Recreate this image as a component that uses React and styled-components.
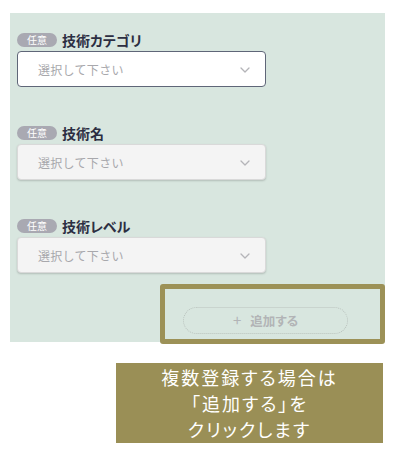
import React from "react";
import styled, { createGlobalStyle } from "styled-components";

const GlobalStyle = createGlobalStyle`
	* {
		box-sizing: border-box;
	}

	body {
		margin: 0;
		background: #ffffff;
		font-family: "Noto Sans CJK JP", "Noto Sans", sans-serif;
	}
`

function Chevron() {
	return (
		<svg width="10" height="6" viewBox="0 0 10 6" fill="none">
			<polyline points="1,1 5,5 9,1" stroke="#b4b4b8" strokeWidth="1.3" strokeLinecap="round" strokeLinejoin="round" />
		</svg>
	)
}

function App() {
	const fields = [
		{label: '技術カテゴリ', focused: true},
		{label: '技術名', focused: false},
		{label: '技術レベル', focused: false},
	]

	return (
		<>
		<GlobalStyle />
		<Panel>
			{fields.map((field, index) => {
				return (
					<Field key={index}>
						<LabelRow>
							<Badge>任意</Badge>
							<Label>{field.label}</Label>
						</LabelRow>
						<Select focused={field.focused}>
							<span>選択して下さい</span>
							<Chevron />
						</Select>
					</Field>
				)
			})}
			<Footer>
				<AddButton>
					<Plus>+</Plus>
					<span>追加する</span>
				</AddButton>
			</Footer>
			<Highlight />
		</Panel>
		<Callout>
			<span>複数登録する場合は</span>
			<span>「追加する」を</span>
			<span>クリックします</span>
		</Callout>
		</>
	)
}

const Panel = styled.section`
	position: relative;
	width: 375px;
	margin: 13px 0 0 10px;
	padding: 20px 0 8px 7px;
	background-color: #d8e6df;
	display: flex;
	flex-direction: column;
	gap: 39px;
`

const Field = styled.div`
	display: flex;
	flex-direction: column;
	gap: 4px;
	width: 249px;
`

const LabelRow = styled.div`
	display: flex;
	align-items: center;
	height: 14px;
	gap: 5px;
`

const Badge = styled.span`
	width: 40px;
	height: 14px;
	border-radius: 7px;
	background-color: #a9a9b2;
	color: #ffffff;
	font-size: 10px;
	line-height: 14px;
	text-align: center;
`

const Label = styled.span`
	font-size: 14px;
	font-weight: bold;
	color: #2c2e42;
	line-height: 14px;
	font-feature-settings: "palt";
`

const Select = styled.div`
	height: 36px;
	display: flex;
	align-items: center;
	justify-content: space-between;
	padding: 0 15px 0 20px;
	border-radius: 4px;
	background-color: ${props => props.focused ? '#ffffff' : '#f4f4f4'};
	border: ${props => props.focused ? '1.5px solid #5f6678' : '1px solid #d9d9d9'};
	box-shadow: ${props => props.focused ? 'none' : '0 1px 2px rgba(0, 0, 0, 0.18)'};

	span {
		font-size: 12px;
		color: #a8a8ac;
		letter-spacing: 0.3px;
	}

	svg {
		margin-top: 2px;
	}
`

const Footer = styled.div`
	display: flex;
	justify-content: flex-end;
	padding-right: 37px;
	margin-top: -5px;
`

const AddButton = styled.div`
	width: 165px;
	height: 27px;
	border: 1px dotted #b9c2bd;
	border-radius: 14px;
	display: flex;
	align-items: center;
	justify-content: center;
	gap: 9px;
	color: #b2b4b6;
	font-size: 12.5px;
	font-weight: bold;
	font-feature-settings: "palt";
`

const Plus = styled.span`
	font-size: 15px;
	font-weight: normal;
	line-height: 1;
	margin-top: -2px;
`

const Highlight = styled.div`
	position: absolute;
	left: 150px;
	top: 271px;
	width: 225px;
	height: 60px;
	border: 5px solid #9c9157;
	border-radius: 3px;
`

const Callout = styled.div`
	width: 267px;
	height: 80px;
	margin: 21px 0 0 116px;
	background-color: #9a8f56;
	display: flex;
	flex-direction: column;
	align-items: center;
	justify-content: center;
	color: #ffffff;
	font-size: 18px;
	line-height: 26px;
	letter-spacing: 2px;
	font-feature-settings: "palt";
`

export default App
